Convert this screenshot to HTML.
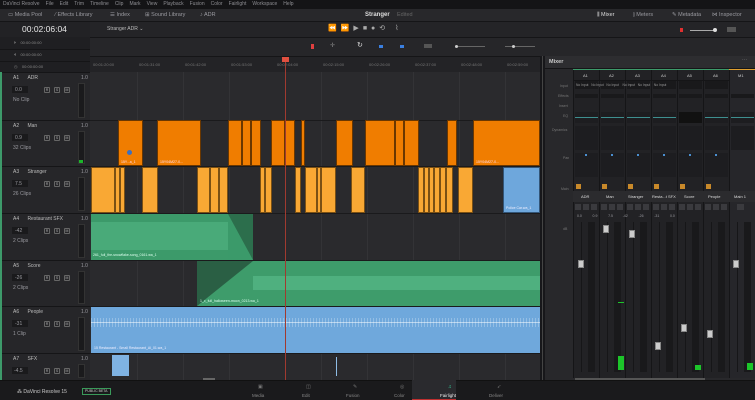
<!DOCTYPE html>
<html><head><meta charset="utf-8"><style>
*{box-sizing:border-box;margin:0;padding:0}
body{width:755px;height:400px;overflow:hidden;background:#1e1e21;font-family:"Liberation Sans",sans-serif;color:#9a9aa0;position:relative;font-size:5px}
div{position:absolute}
.t{white-space:nowrap}
.menu{left:0;top:0;width:755px;height:9px;background:#141416;font-size:5px;color:#8d8d92;line-height:9px;padding-left:3px}
.menu span{margin-right:6px}
.tb{left:0;top:9px;width:755px;height:13px;background:#28282b;border-bottom:1px solid #151517;font-size:5.5px;line-height:13px;color:#9a9aa0}
.lp{left:0;top:22px;width:90px;height:358px;background:#222225}
.th{left:0;width:90px;background:#262629;border-top:1px solid #151517}
.btn{width:6px;height:6px;border:1px solid #666;border-radius:1px;font-size:3.5px;color:#aaa;text-align:center;line-height:4px}
.tl{left:90px;top:72px;width:450px;height:308px;background:#2a2a2d}
.c{background:#f07d00;border:1px solid #6a3700}
.c3{background:#f9a834;border:1px solid #7a5014}
.col{width:26px;border-left:1px solid #151517}
</style></head><body>
<div class="menu t"><span>DaVinci Resolve</span><span>File</span><span>Edit</span><span>Trim</span><span>Timeline</span><span>Clip</span><span>Mark</span><span>View</span><span>Playback</span><span>Fusion</span><span>Color</span><span>Fairlight</span><span>Workspace</span><span>Help</span></div>
<div class="tb">
<div class="t" style="left:8px">▭ Media Pool</div>
<div class="t" style="left:55px">⁄ Effects Library</div>
<div class="t" style="left:110px">☰ Index</div>
<div class="t" style="left:145px">⊞ Sound Library</div>
<div class="t" style="left:200px">♪ ADR</div>
<div class="t" style="left:365px;color:#ddd;font-weight:bold;font-size:6px">Stranger</div>
<div class="t" style="left:397px;color:#666">Edited</div>
<div class="t" style="left:597px;color:#ddd">⫼ Mixer</div>
<div class="t" style="left:633px">⫾ Meters</div>
<div class="t" style="left:672px">✎ Metadata</div>
<div class="t" style="left:712px">⋈ Inspector</div>
</div>
<!-- left panel -->
<div class="lp"></div>
<div class="t" style="left:22px;top:24px;font-size:8.5px;color:#e6e6e6">00:02:06:04</div>
<div style="left:0;top:37px;width:90px;height:36px;background:#1f1f22"></div>
<div class="t" style="left:14px;top:40px;color:#888;font-size:4px">⏵&nbsp;&nbsp;&nbsp;&nbsp;00:00:00:00</div>
<div class="t" style="left:14px;top:52px;color:#888;font-size:4px">⏴&nbsp;&nbsp;&nbsp;&nbsp;00:00:00:00</div>
<div class="t" style="left:14px;top:64px;color:#888;font-size:4px">◷&nbsp;&nbsp;&nbsp;&nbsp;00:00:00:00</div>
<div style="left:0;top:49px;width:90px;height:1px;background:#151517"></div>
<div style="left:0;top:61px;width:90px;height:1px;background:#151517"></div>
<!-- top right toolbars -->
<div style="left:90px;top:22px;width:665px;height:15px;background:#242427"></div>
<div class="t" style="left:107px;top:26px;color:#bbb">Stranger ADR ⌄</div>
<div class="t" style="left:328px;top:24px;color:#aaa;font-size:7px;letter-spacing:4px">⏪⏩▶■●⟲ ⌇</div>
<div style="left:680px;top:28px;width:3px;height:4px;background:#e03030"></div>
<div style="left:690px;top:30px;width:24px;height:1px;background:#aaa"></div>
<div style="left:713px;top:28px;width:4px;height:4px;border-radius:2px;background:#ddd"></div>
<div style="left:727px;top:27px;width:9px;height:5px;background:#555"></div>
<div style="left:90px;top:37px;width:665px;height:19px;background:#262629;border-top:1px solid #151517"></div>
<div style="left:311px;top:44px;width:3px;height:5px;background:#e04040"></div>
<div class="t" style="left:330px;top:42px;color:#888;font-size:6px">✛</div>
<div class="t" style="left:357px;top:41px;color:#ddd;font-size:7px">↻</div>
<div style="left:379px;top:45px;width:4px;height:3px;background:#3a7fe0"></div>
<div style="left:400px;top:45px;width:4px;height:3px;background:#3a7fe0"></div>
<div style="left:424px;top:44px;width:8px;height:4px;background:#555"></div>
<div style="left:455px;top:46px;width:30px;height:1px;background:#666"></div>
<div style="left:455px;top:45px;width:3px;height:3px;border-radius:2px;background:#ccc"></div>
<div style="left:505px;top:46px;width:30px;height:1px;background:#666"></div>
<div style="left:512px;top:45px;width:3px;height:3px;border-radius:2px;background:#ccc"></div>
<!-- ruler -->
<div style="left:90px;top:56px;width:450px;height:16px;background:#232326;border-top:1px solid #151517"></div>
<div class="t" style="left:93px;top:62px;font-size:4px;color:#777;word-spacing:0">00:01:20:00</div>
<div class="t" style="left:139px;top:62px;font-size:4px;color:#777">00:01:31:00</div>
<div class="t" style="left:185px;top:62px;font-size:4px;color:#777">00:01:42:00</div>
<div class="t" style="left:231px;top:62px;font-size:4px;color:#777">00:01:53:00</div>
<div class="t" style="left:277px;top:62px;font-size:4px;color:#777">00:02:04:00</div>
<div class="t" style="left:323px;top:62px;font-size:4px;color:#777">00:02:15:00</div>
<div class="t" style="left:369px;top:62px;font-size:4px;color:#777">00:02:26:00</div>
<div class="t" style="left:415px;top:62px;font-size:4px;color:#777">00:02:37:00</div>
<div class="t" style="left:461px;top:62px;font-size:4px;color:#777">00:02:48:00</div>
<div class="t" style="left:507px;top:62px;font-size:4px;color:#777">00:02:59:00</div>
<!-- timeline -->
<div class="tl"></div>
<div style="left:137px;top:72px;width:1px;height:308px;background:#333336"></div>
<div style="left:183px;top:72px;width:1px;height:308px;background:#333336"></div>
<div style="left:229px;top:72px;width:1px;height:308px;background:#333336"></div>
<div style="left:321px;top:72px;width:1px;height:308px;background:#333336"></div>
<div style="left:367px;top:72px;width:1px;height:308px;background:#333336"></div>
<div style="left:413px;top:72px;width:1px;height:308px;background:#333336"></div>
<div style="left:459px;top:72px;width:1px;height:308px;background:#333336"></div>
<div style="left:505px;top:72px;width:1px;height:308px;background:#333336"></div>
<!-- track headers -->
<div class="th" style="top:72px;height:48px"></div>
<div class="th" style="top:120px;height:46px"></div>
<div class="th" style="top:166px;height:47px"></div>
<div class="th" style="top:213px;height:47px"></div>
<div class="th" style="top:260px;height:46px"></div>
<div class="th" style="top:306px;height:47px"></div>
<div class="th" style="top:353px;height:27px"></div>
<div style="left:0;top:72px;width:2px;height:308px;background:#3d9a6a"></div>
<div style="left:78px;top:83px;width:7px;height:35px;background:#1a1a1c;border:1px solid #333"></div>
<div style="left:78px;top:131px;width:7px;height:33px;background:#1a1a1c;border:1px solid #333"></div>
<div style="left:79px;top:160px;width:4px;height:3px;background:#1bb52a"></div>
<div style="left:78px;top:177px;width:7px;height:34px;background:#1a1a1c;border:1px solid #333"></div>
<div style="left:78px;top:224px;width:7px;height:34px;background:#1a1a1c;border:1px solid #333"></div>
<div style="left:78px;top:271px;width:7px;height:33px;background:#1a1a1c;border:1px solid #333"></div>
<div style="left:78px;top:317px;width:7px;height:34px;background:#1a1a1c;border:1px solid #333"></div>
<div style="left:78px;top:364px;width:7px;height:14px;background:#1a1a1c;border:1px solid #333"></div>
<!-- header texts -->
<div class="t" style="left:13px;top:75px;color:#bbb">A1&nbsp;&nbsp;&nbsp;&nbsp;&nbsp;&nbsp;ADR</div><div class="t" style="left:81px;top:75px">1.0</div>
<div class="t" style="left:13px;top:123px;color:#bbb">A2&nbsp;&nbsp;&nbsp;&nbsp;&nbsp;&nbsp;Man</div><div class="t" style="left:81px;top:123px">1.0</div>
<div class="t" style="left:13px;top:169px;color:#bbb">A3&nbsp;&nbsp;&nbsp;&nbsp;&nbsp;&nbsp;Stranger</div><div class="t" style="left:81px;top:169px">1.0</div>
<div class="t" style="left:13px;top:216px;color:#bbb">A4&nbsp;&nbsp;&nbsp;&nbsp;&nbsp;&nbsp;Restaurant SFX</div><div class="t" style="left:81px;top:216px">1.0</div>
<div class="t" style="left:13px;top:263px;color:#bbb">A5&nbsp;&nbsp;&nbsp;&nbsp;&nbsp;&nbsp;Score</div><div class="t" style="left:81px;top:263px">1.0</div>
<div class="t" style="left:13px;top:309px;color:#bbb">A6&nbsp;&nbsp;&nbsp;&nbsp;&nbsp;&nbsp;People</div><div class="t" style="left:81px;top:309px">1.0</div>
<div class="t" style="left:13px;top:356px;color:#bbb">A7&nbsp;&nbsp;&nbsp;&nbsp;&nbsp;&nbsp;SFX</div><div class="t" style="left:81px;top:356px">1.0</div>
<div style="left:12px;top:86px;width:16px;height:7px;background:#1a1a1c"></div><div class="t" style="left:15px;top:87px">0.0</div><div class="t" style="left:13px;top:97px">No Clip</div>
<div style="left:12px;top:134px;width:16px;height:7px;background:#1a1a1c"></div><div class="t" style="left:15px;top:135px">0.9</div><div class="t" style="left:13px;top:145px">32 Clips</div>
<div style="left:12px;top:180px;width:16px;height:7px;background:#1a1a1c"></div><div class="t" style="left:15px;top:181px">7.5</div><div class="t" style="left:13px;top:191px">26 Clips</div>
<div style="left:12px;top:227px;width:16px;height:7px;background:#1a1a1c"></div><div class="t" style="left:15px;top:228px">-42</div><div class="t" style="left:13px;top:238px">2 Clips</div>
<div style="left:12px;top:274px;width:16px;height:7px;background:#1a1a1c"></div><div class="t" style="left:15px;top:275px">-26</div><div class="t" style="left:13px;top:285px">2 Clips</div>
<div style="left:12px;top:320px;width:16px;height:7px;background:#1a1a1c"></div><div class="t" style="left:15px;top:321px">-31</div><div class="t" style="left:13px;top:331px">1 Clip</div>
<div style="left:12px;top:367px;width:16px;height:7px;background:#1a1a1c"></div><div class="t" style="left:14px;top:368px">-4.5</div>
<div class="btn" style="left:44px;top:87px">R</div><div class="btn" style="left:54px;top:87px">S</div><div class="btn" style="left:64px;top:87px">M</div>
<div class="btn" style="left:44px;top:135px">R</div><div class="btn" style="left:54px;top:135px">S</div><div class="btn" style="left:64px;top:135px">M</div>
<div class="btn" style="left:44px;top:181px">R</div><div class="btn" style="left:54px;top:181px">S</div><div class="btn" style="left:64px;top:181px">M</div>
<div class="btn" style="left:44px;top:228px">R</div><div class="btn" style="left:54px;top:228px">S</div><div class="btn" style="left:64px;top:228px">M</div>
<div class="btn" style="left:44px;top:275px">R</div><div class="btn" style="left:54px;top:275px">S</div><div class="btn" style="left:64px;top:275px">M</div>
<div class="btn" style="left:44px;top:321px">R</div><div class="btn" style="left:54px;top:321px">S</div><div class="btn" style="left:64px;top:321px">M</div>
<div class="btn" style="left:44px;top:368px">R</div><div class="btn" style="left:54px;top:368px">S</div><div class="btn" style="left:64px;top:368px">M</div>
<!-- track separators in timeline -->
<div style="left:90px;top:120px;width:450px;height:1px;background:#1a1a1c"></div>
<div style="left:90px;top:166px;width:450px;height:1px;background:#1a1a1c"></div>
<div style="left:90px;top:213px;width:450px;height:1px;background:#1a1a1c"></div>
<div style="left:90px;top:260px;width:450px;height:1px;background:#1a1a1c"></div>
<div style="left:90px;top:306px;width:450px;height:1px;background:#1a1a1c"></div>
<div style="left:90px;top:353px;width:450px;height:1px;background:#1a1a1c"></div>
<!-- A2 clips -->
<div class="c" style="left:118px;top:120px;width:25px;height:46px"></div>
<div class="c" style="left:157px;top:120px;width:44px;height:46px"></div>
<div class="c" style="left:228px;top:120px;width:14px;height:46px"></div>
<div class="c" style="left:242px;top:120px;width:9px;height:46px"></div>
<div class="c" style="left:251px;top:120px;width:10px;height:46px"></div>
<div class="c" style="left:271px;top:120px;width:14px;height:46px"></div>
<div class="c" style="left:285px;top:120px;width:10px;height:46px"></div>
<div class="c" style="left:301px;top:120px;width:4px;height:46px"></div>
<div class="c" style="left:336px;top:120px;width:17px;height:46px"></div>
<div class="c" style="left:365px;top:120px;width:30px;height:46px"></div>
<div class="c" style="left:395px;top:120px;width:9px;height:46px"></div>
<div class="c" style="left:404px;top:120px;width:15px;height:46px"></div>
<div class="c" style="left:447px;top:120px;width:10px;height:46px"></div>
<div class="c" style="left:473px;top:120px;width:67px;height:46px"></div>
<div style="left:127px;top:150px;width:5px;height:5px;border-radius:3px;background:#3a6fc0"></div>
<div class="t" style="left:121px;top:160px;font-size:3.5px;color:#fde">15Y...a_1</div>
<div class="t" style="left:160px;top:160px;font-size:3.5px;color:#fde">15Y04M27-0...</div>
<div class="t" style="left:476px;top:160px;font-size:3.5px;color:#fde">15Y04M27-0...</div>
<!-- A3 clips -->
<div class="c3" style="left:91px;top:167px;width:24px;height:46px"></div>
<div class="c3" style="left:115px;top:167px;width:5px;height:46px"></div>
<div class="c3" style="left:120px;top:167px;width:5px;height:46px"></div>
<div class="c3" style="left:142px;top:167px;width:16px;height:46px"></div>
<div class="c3" style="left:197px;top:167px;width:13px;height:46px"></div>
<div class="c3" style="left:210px;top:167px;width:9px;height:46px"></div>
<div class="c3" style="left:219px;top:167px;width:9px;height:46px"></div>
<div class="c3" style="left:260px;top:167px;width:5px;height:46px"></div>
<div class="c3" style="left:265px;top:167px;width:7px;height:46px"></div>
<div class="c3" style="left:295px;top:167px;width:6px;height:46px"></div>
<div class="c3" style="left:305px;top:167px;width:12px;height:46px"></div>
<div class="c3" style="left:317px;top:167px;width:4px;height:46px"></div>
<div class="c3" style="left:321px;top:167px;width:15px;height:46px"></div>
<div class="c3" style="left:351px;top:167px;width:14px;height:46px"></div>
<div class="c3" style="left:418px;top:167px;width:6px;height:46px"></div>
<div class="c3" style="left:424px;top:167px;width:5px;height:46px"></div>
<div class="c3" style="left:429px;top:167px;width:5px;height:46px"></div>
<div class="c3" style="left:434px;top:167px;width:6px;height:46px"></div>
<div class="c3" style="left:440px;top:167px;width:6px;height:46px"></div>
<div class="c3" style="left:446px;top:167px;width:7px;height:46px"></div>
<div class="c3" style="left:458px;top:167px;width:15px;height:46px"></div>
<div style="left:503px;top:167px;width:37px;height:46px;background:#6ea7dc;border:1px solid #335577"></div>
<div class="t" style="left:506px;top:206px;font-size:3.5px;color:#eef">Police Car.wa_1</div>
<!-- A4 -->
<div style="left:91px;top:214px;width:162px;height:46px;background:#3c9a6a"></div>
<div style="left:91px;top:222px;width:137px;height:28px;background:#52b583;opacity:.6"></div>
<svg style="position:absolute;left:228px;top:214px" width="26" height="46"><polygon points="0,0 25,46 25,0" fill="#2c6e4c"/><polygon points="0,0 0,46 25,46" fill="#3c9a6a" opacity=".3"/></svg>
<div class="t" style="left:93px;top:253px;font-size:3.5px;color:#dfe">261_full_the-snowflake-song_0161.wa_1</div>
<!-- A5 -->
<div style="left:197px;top:261px;width:343px;height:45px;background:#3e9c6b"></div>
<div style="left:253px;top:276px;width:287px;height:14px;background:#4fb07f"></div>
<svg style="position:absolute;left:197px;top:261px" width="57" height="45"><polygon points="0,0 56,0 0,45" fill="#2a5f44"/></svg>
<div class="t" style="left:200px;top:299px;font-size:3.5px;color:#dfe">1_c_full_halloween-moon_0213.wa_1</div>
<!-- A6 -->
<div style="left:91px;top:307px;width:449px;height:46px;background:#6fa8dc"></div>
<div style="left:91px;top:322px;width:449px;height:1px;background:#b9d5ef"></div>
<div style="left:91px;top:318px;width:449px;height:9px;background:repeating-linear-gradient(90deg,rgba(255,255,255,.25) 0 1px,transparent 1px 3px)"></div>
<div class="t" style="left:94px;top:346px;font-size:3.5px;color:#eef">15 Restaurant - Small Restaurant_Al_01.wa_1</div>
<!-- A7 -->
<div style="left:112px;top:355px;width:17px;height:21px;background:#7fb3e3"></div>
<div style="left:336px;top:357px;width:1px;height:19px;background:#8fbde6"></div>
<div style="left:203px;top:378px;width:12px;height:2px;background:#666"></div>
<!-- playhead -->
<div style="left:285px;top:58px;width:1px;height:322px;background:#a03a30"></div>
<div style="left:282px;top:57px;width:7px;height:5px;background:#e05040"></div>
<!-- divider -->
<div style="left:540px;top:56px;width:5px;height:324px;background:#17171a"></div>
<div style="left:542px;top:56px;width:1px;height:324px;background:#444"></div>
<!-- mixer -->
<div style="left:545px;top:56px;width:210px;height:324px;background:#28282b"></div>
<div style="left:545px;top:56px;width:210px;height:13px;background:#2d2d30;border-bottom:1px solid #151517"></div>
<div class="t" style="left:549px;top:59px;font-size:5.5px;color:#ccc;font-weight:bold">Mixer</div>
<div class="t" style="left:742px;top:57px;color:#888">···</div>
<div style="left:573px;top:69px;width:182px;height:309px;background:#222225"></div>
<div style="left:573px;top:69px;width:156px;height:1px;background:#3d9a6a"></div>
<div style="left:729px;top:69px;width:26px;height:1px;background:#e0a030"></div>
<div style="left:729px;top:70px;width:26px;height:308px;background:#26262a"></div>
<div class="t" style="left:560px;top:84px;font-size:3.5px;color:#777">Input</div>
<div class="t" style="left:558px;top:94px;font-size:3.5px;color:#777">Effects</div>
<div class="t" style="left:559px;top:104px;font-size:3.5px;color:#777">Insert</div>
<div class="t" style="left:563px;top:114px;font-size:3.5px;color:#777">EQ</div>
<div class="t" style="left:552px;top:128px;font-size:3.5px;color:#777">Dynamics</div>
<div class="t" style="left:563px;top:156px;font-size:3.5px;color:#777">Pan</div>
<div class="t" style="left:561px;top:187px;font-size:3.5px;color:#777">Main</div>
<div class="t" style="left:563px;top:227px;font-size:3.5px;color:#777">dB</div>
<!-- columns -->
<div style="left:573px;top:70px;width:182px;height:308px;background:repeating-linear-gradient(90deg,#151517 0 1px,transparent 1px 26px)"></div>
<div class="t" style="left:583px;top:73px;color:#ccc;font-size:4px">A1</div>
<div class="t" style="left:609px;top:73px;color:#ccc;font-size:4px">A2</div>
<div class="t" style="left:635px;top:73px;color:#ccc;font-size:4px">A3</div>
<div class="t" style="left:661px;top:73px;color:#ccc;font-size:4px">A4</div>
<div class="t" style="left:687px;top:73px;color:#ccc;font-size:4px">A5</div>
<div class="t" style="left:713px;top:73px;color:#ccc;font-size:4px">A6</div>
<div class="t" style="left:738px;top:73px;color:#ccc;font-size:4px">M1</div>
<div style="left:573px;top:80px;width:156px;height:1px;background:#151517"></div>
<!-- per-column boxes via repeating gradients -->
<div style="left:575px;top:81px;width:154px;height:8px;background:repeating-linear-gradient(90deg,#19191b 0 23px,transparent 23px 26px)"></div>
<div class="t" style="left:576px;top:83px;font-size:3.3px;color:#999;word-spacing:0">No Input&nbsp;&nbsp;&nbsp;No Input&nbsp;&nbsp;&nbsp;No Input&nbsp;&nbsp;&nbsp;&nbsp;No Input&nbsp;&nbsp;&nbsp;No Input&nbsp;&nbsp;&nbsp;&nbsp;No Input</div>
<div style="left:575px;top:94px;width:180px;height:4px;background:repeating-linear-gradient(90deg,#19191b 0 23px,transparent 23px 26px)"></div>
<div style="left:575px;top:112px;width:180px;height:11px;background:repeating-linear-gradient(90deg,#1d1d20 0 23px,transparent 23px 26px)"></div>
<div style="left:575px;top:117px;width:180px;height:1px;background:repeating-linear-gradient(90deg,#3e8f8f 0 23px,transparent 23px 26px)"></div>
<div style="left:679px;top:112px;width:23px;height:11px;background:#111"></div>
<div style="left:575px;top:126px;width:180px;height:24px;background:repeating-linear-gradient(90deg,#1d1d20 0 23px,transparent 23px 26px)"></div>
<div style="left:575px;top:153px;width:154px;height:24px;background:repeating-linear-gradient(90deg,#1d1d20 0 23px,transparent 23px 26px)"></div>
<div style="left:585px;top:154px;width:150px;height:2px;background:repeating-linear-gradient(90deg,#4a8fd0 0 2px,transparent 2px 26px)"></div>
<div style="left:576px;top:184px;width:150px;height:5px;background:repeating-linear-gradient(90deg,#c8892a 0 5px,transparent 5px 26px)"></div>
<div style="left:573px;top:191px;width:182px;height:11px;background:#2b2b2e"></div>
<div class="t" style="left:581px;top:194px;font-size:4px;color:#ddd">ADR</div>
<div class="t" style="left:606px;top:194px;font-size:4px;color:#ddd">Man</div>
<div class="t" style="left:628px;top:194px;font-size:4px;color:#ddd">Stranger</div>
<div class="t" style="left:652px;top:194px;font-size:4px;color:#ddd">Resta...t SFX</div>
<div class="t" style="left:684px;top:194px;font-size:4px;color:#ddd">Score</div>
<div class="t" style="left:708px;top:194px;font-size:4px;color:#ddd">People</div>
<div class="t" style="left:734px;top:194px;font-size:4px;color:#ddd">Main 1</div>
<div style="left:575px;top:204px;width:154px;height:6px;background:repeating-linear-gradient(90deg,#3a3a3e 0 6px,transparent 6px 8px,#3a3a3e 8px 14px,transparent 14px 16px,#3a3a3e 16px 22px,transparent 22px 26px)"></div>
<div style="left:737px;top:204px;width:7px;height:6px;background:#3a3a3e"></div>
<div class="t" style="left:577px;top:214px;font-size:3.5px">0.0&nbsp;&nbsp;&nbsp;&nbsp;&nbsp;&nbsp;&nbsp;&nbsp;&nbsp;&nbsp;&nbsp;0.9&nbsp;&nbsp;&nbsp;&nbsp;&nbsp;&nbsp;&nbsp;&nbsp;&nbsp;&nbsp;&nbsp;7.5&nbsp;&nbsp;&nbsp;&nbsp;&nbsp;&nbsp;&nbsp;&nbsp;&nbsp;&nbsp;-42&nbsp;&nbsp;&nbsp;&nbsp;&nbsp;&nbsp;&nbsp;&nbsp;&nbsp;&nbsp;&nbsp;-26&nbsp;&nbsp;&nbsp;&nbsp;&nbsp;&nbsp;&nbsp;&nbsp;&nbsp;&nbsp;&nbsp;-31&nbsp;&nbsp;&nbsp;&nbsp;&nbsp;&nbsp;&nbsp;&nbsp;&nbsp;&nbsp;&nbsp;0.0</div>
<!-- fader tracks and meters -->
<div style="left:578px;top:222px;width:180px;height:150px;background:repeating-linear-gradient(90deg,transparent 0 3px,#161618 3px 4px,transparent 4px 10px,#19191b 10px 17px,transparent 17px 26px)"></div>
<div style="left:578px;top:260px;width:6px;height:8px;background:#ccc;border:1px solid #888"></div>
<div style="left:603px;top:225px;width:6px;height:8px;background:#ccc;border:1px solid #888"></div>
<div style="left:629px;top:230px;width:6px;height:8px;background:#ccc;border:1px solid #888"></div>
<div style="left:655px;top:342px;width:6px;height:8px;background:#ccc;border:1px solid #888"></div>
<div style="left:681px;top:324px;width:6px;height:8px;background:#ccc;border:1px solid #888"></div>
<div style="left:707px;top:330px;width:6px;height:8px;background:#ccc;border:1px solid #888"></div>
<div style="left:733px;top:260px;width:6px;height:8px;background:#ccc;border:1px solid #888"></div>
<div style="left:618px;top:356px;width:6px;height:14px;background:#1cc52a"></div>
<div style="left:695px;top:365px;width:6px;height:5px;background:#1cc52a"></div>
<div style="left:747px;top:363px;width:6px;height:7px;background:#1cc52a"></div>
<div style="left:618px;top:302px;width:6px;height:1px;background:#1cc52a"></div>
<div style="left:575px;top:378px;width:130px;height:2px;background:#555"></div>
<div class="t" style="left:688px;top:384px;font-size:9px;color:#fff">wtvid.com ⚙</div>
<!-- bottom bar -->
<div style="left:0;top:380px;width:755px;height:20px;background:#1a1a1c;border-top:1px solid #111"></div>
<div class="t" style="left:17px;top:389px;font-size:5px;color:#ccc">⁂ DaVinci Resolve 15</div>
<div class="t" style="left:82px;top:388px;font-size:3.5px;color:#ccc;border:1px solid #3a9a5a;padding:0 2px;line-height:5px">PUBLIC BETA</div>
<div style="left:412px;top:380px;width:44px;height:20px;background:#2a2a2e"></div>
<div style="left:412px;top:399px;width:44px;height:1px;background:#c03030"></div>
<div class="t" style="left:252px;top:393px;font-size:4.5px;color:#888">Media</div>
<div class="t" style="left:302px;top:393px;font-size:4.5px;color:#888">Edit</div>
<div class="t" style="left:346px;top:393px;font-size:4.5px;color:#888">Fusion</div>
<div class="t" style="left:394px;top:393px;font-size:4.5px;color:#888">Color</div>
<div class="t" style="left:440px;top:393px;font-size:4.5px;color:#eee">Fairlight</div>
<div class="t" style="left:489px;top:393px;font-size:4.5px;color:#888">Deliver</div>
<div class="t" style="left:258px;top:384px;font-size:5px;color:#777">▣</div>
<div class="t" style="left:306px;top:384px;font-size:5px;color:#777">◫</div>
<div class="t" style="left:353px;top:384px;font-size:5px;color:#777">✎</div>
<div class="t" style="left:400px;top:384px;font-size:5px;color:#777">◎</div>
<div class="t" style="left:448px;top:384px;font-size:5px;color:#3c9">♫</div>
<div class="t" style="left:497px;top:384px;font-size:5px;color:#777">➶</div>
</body></html>
